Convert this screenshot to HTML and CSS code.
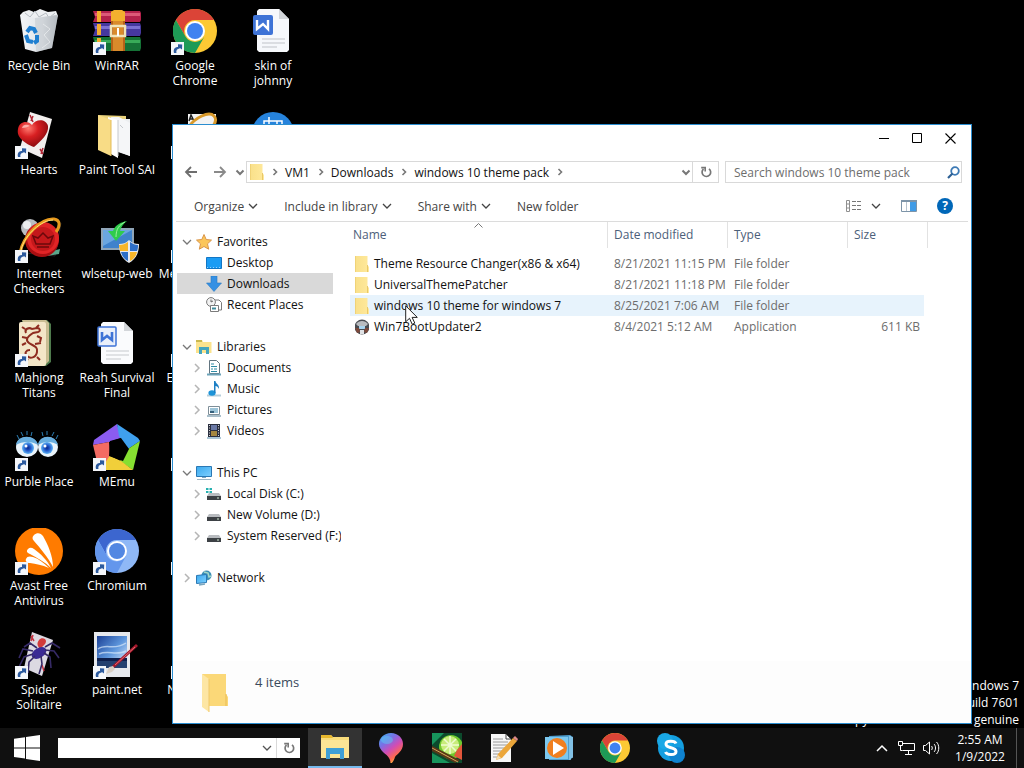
FILE: index.html
```html
<!DOCTYPE html>
<html lang="en">

<head>
    <meta charset="UTF-8">
    <meta name="viewport" content="width=device-width, initial-scale=1.0">
    <title>Desktop</title>
    <link rel="stylesheet" href="styles.css">
</head>

<body>
    <!-- Shared icons -->
    <svg class="sprite" aria-hidden="true">
        <defs>
            <linearGradient id="gFolder" x1="0" x2="1"><stop offset="0" stop-color="#f9e08a"/><stop offset="1" stop-color="#ffe99c"/></linearGradient>
            <radialGradient id="gRed" cx=".35" cy=".3" r=".8"><stop offset="0" stop-color="#ff7a70"/><stop offset=".4" stop-color="#d81f22"/><stop offset="1" stop-color="#7c060b"/></radialGradient>
            <linearGradient id="gBin" x1="0" x2="1"><stop offset="0" stop-color="#f4f6f8"/><stop offset=".6" stop-color="#dfe3e7"/><stop offset="1" stop-color="#a3a9af"/></linearGradient>
            <linearGradient id="gSky" x1="0" y1="0" x2="1" y2="1"><stop offset="0" stop-color="#1b3f94"/><stop offset=".5" stop-color="#5d96dc"/><stop offset="1" stop-color="#e8f3ff"/></linearGradient>
            <linearGradient id="gScreen" x1="0" y1="0" x2="1" y2="1"><stop offset="0" stop-color="#3aa9ee"/><stop offset="1" stop-color="#7fd0ff"/></linearGradient>
            <linearGradient id="gPin" x1="0" y1="0" x2=".6" y2="1"><stop offset="0" stop-color="#35b8f1"/><stop offset=".35" stop-color="#7a6fe6"/><stop offset=".6" stop-color="#d14cb4"/><stop offset=".85" stop-color="#ff6a4d"/><stop offset="1" stop-color="#ffc83d"/></linearGradient>
            <radialGradient id="gEye" cx=".5" cy=".5" r=".5"><stop offset="0" stop-color="#0b2a86"/><stop offset=".4" stop-color="#1c4fc4"/><stop offset="1" stop-color="#5fb4f5"/></radialGradient>
        </defs>
        <symbol id="shortcut" viewBox="0 0 13 13">
            <path d="M0 0h13v13H0z" fill="#f4f6fa"/>
            <path d="M3 11c-1-4 1-6 4-6V2.200l4.200 .2-.2 5.100-1.700-1.300C6 7 5 8 5.500 11z" fill="#2c5a9e"/>
        </symbol>
        <symbol id="chrome" viewBox="0 0 44 44">
            <circle cx="22" cy="22" r="22" fill="#fcc934"/>
            <path d="M2.900 11A22 22 0 0 1 41 11H22A11 11 0 0 0 12.500 27.500z" fill="#db4437"/>
            <path d="M2.900 11A22 22 0 0 0 22 44L31.500 27.500A11 11 0 0 1 12.500 27.500z" fill="#1e9a56"/>
            <circle cx="22" cy="22" r="10" fill="#fff"/>
            <circle cx="22" cy="22" r="8" fill="#3f82f0"/>
        </symbol>
        <symbol id="folder" viewBox="0 0 14 16">
            <path d="M0 0h12.500v9l1.500 2v5H0z" fill="url(#gFolder)"/>
            <path d="M12.500 9v7M0 0v16" stroke="#e3bf5c" stroke-width=".8"/>
        </symbol>
        <symbol id="down" viewBox="0 0 10 10">
            <path d="M1 3l4 4 4-4" fill="none" stroke="currentColor" stroke-width="1.300"/>
        </symbol>
        <symbol id="down-bold" viewBox="0 0 10 10">
            <path d="M1.500 3.500l3.500 3.500 3.500-3.500" fill="none" stroke="currentColor" stroke-width="2"/>
        </symbol>
        <symbol id="right" viewBox="0 0 10 10">
            <path d="M3 1l4 4-4 4" fill="none" stroke="currentColor" stroke-width="1.500"/>
        </symbol>
        <symbol id="right-small" viewBox="0 0 10 10">
            <path d="M3.500 2l3 3-3 3" fill="none" stroke="currentColor" stroke-width="1.600"/>
        </symbol>
        <symbol id="refresh" viewBox="0 0 12 12">
            <path d="M9 2.800A4.300 4.300 0 1 1 3.500 3" fill="none" stroke="currentColor" stroke-width="1.700"/>
            <path d="M1.200 1.600h4v4" fill="none" stroke="currentColor" stroke-width="1.600"/>
        </symbol>
        <symbol id="disk" viewBox="0 0 16 16">
            <path d="M3 7h10l2 3H1z" fill="#b9bcc0"/>
            <path d="M1 10h14v4H1z" fill="#3d4145"/>
            <path d="M11 12h2" stroke="#cfe8cf"/>
        </symbol>
    </svg>

    <main class="desktop">
        <!-- Desktop icons, "first" starts a new row -->
        <div class="icons">
            <a class="icon first" href="#">
                <span class="pic"><svg viewBox="0 0 48 48">
                    <path d="M5 7l3-3 6-2 5 2 6-3 8 3 8-1 2 5-4 5H9z" fill="#eef0f2"/>
                    <path d="M10 5l5 4 5-6 4 6 7-4 3 5 6-5" fill="none" stroke="#b6bcc2"/>
                    <path d="M5 7l15 3 23-3-6 33-16 4-11-3z" fill="url(#gBin)"/>
                    <path d="M20 10l23-3-6 33-16 4z" fill="#c3c8cd" opacity=".55"/>
                    <path d="M28 16l7 5-6 6 6 7-8 6" fill="none" stroke="#f4f5f6" opacity=".6"/>
                    <g fill="none" stroke="#1f7fd0" stroke-width="4">
                        <path d="M12 24l3-4 4 1 2 4"/>
                        <path d="M11 27l2 6 5 1"/>
                        <path d="M22 27v6l-3 2"/>
                    </g>
                </svg></span>
                <span class="name">Recycle Bin</span>
            </a>
            <a class="icon" href="#">
                <span class="pic"><svg viewBox="0 0 48 48">
                    <path d="M0 3h47l1 2v7l-1 2H0l2-5z" fill="#b4224c"/>
                    <path d="M2 5h45v3H2z" fill="#dc5a78"/>
                    <path d="M0 15h47l1 3v7l-1 3H0l2-6z" fill="#46389f"/>
                    <path d="M2 18h45v3H2z" fill="#7b70d2"/>
                    <path d="M0 29h47l1 3v8l-1 3H0l2-6z" fill="#157236"/>
                    <path d="M2 32h45v3H2z" fill="#38ab58"/>
                    <path d="M4 3h4v11H4zM4 16h4v11H4zM4 30h4v12H4z" fill="#f4ae2e"/>
                    <path d="M18 3h14v40H18z" fill="#b66219"/>
                    <path d="M20 3h10v40H20z" fill="#d98a2b"/>
                    <path d="M18 4l3-2h8l3 2v9H18z" fill="#f3b02e"/>
                    <path d="M18 18h14v10H18z" fill="none" stroke="#efe3b8" stroke-width="2.500"/>
                    <path d="M25 20v8" stroke="#fff" stroke-width="2"/>
                </svg><svg class="arrow"><use href="#shortcut"/></svg></span>
                <span class="name">WinRAR</span>
            </a>
            <a class="icon" href="#">
                <span class="pic"><svg viewBox="0 0 48 48"><use href="#chrome" x="2" y="1" width="44" height="44"/></svg><svg class="arrow"><use href="#shortcut"/></svg></span>
                <span class="name">Google Chrome</span>
            </a>
            <a class="icon" href="#">
                <span class="pic"><svg viewBox="0 0 48 48">
                    <path d="M10 1h20l10 10v31l-2 2H10l-2-2V3z" fill="#f6f8fb"/>
                    <path d="M30 1v10h10z" fill="#d3d6da"/>
                    <path d="M13 31h23M13 35h23M13 39h15" stroke="#c0c3c8"/>
                    <rect x="4" y="7" width="20" height="20" rx="2" fill="#3e73d6"/>
                    <path d="M8 12v9l6-5 5 5v-9" fill="none" stroke="#fff" stroke-width="2.400"/>
                </svg></span>
                <span class="name">skin of johnny</span>
            </a>
            <a class="icon first" href="#">
                <span class="pic"><svg viewBox="0 0 48 48">
                    <path d="M15 0l22 7-10 39-22-10z" fill="#f2efee"/>
                    <path d="M15 3l3 7M16 9l2-5M25 37l3 5M28 36l-2 6" stroke="#b02634" stroke-width="1.500"/>
                    <path d="M19 35C11 32 1 26 3 17c1-8 10-9 14-4 3-6 14-7 16 1 1 8-7 15-14 21z" fill="url(#gRed)"/>
                    <path d="M7 16c1-4 5-4 8-2-3 1-5 2-8 2z" fill="#ffc5bf" opacity=".8"/>
                </svg><svg class="arrow"><use href="#shortcut"/></svg></span>
                <span class="name">Hearts</span>
            </a>
            <a class="icon" href="#">
                <span class="pic"><svg viewBox="0 0 48 48">
                    <path d="M5 3l28 1v32l-20 3z" fill="#e9d27c"/>
                    <path d="M26 7h11v37l-12-4z" fill="#eceef0"/>
                    <path d="M18 5h8l11 6v33l-13-5z" fill="#f5f6f8"/>
                    <path d="M15 5l10 3v38l-9-5z" fill="#fff"/>
                    <path d="M5 3l13 5v36L5 38z" fill="#f8dc86"/>
                    <path d="M18 8v36" stroke="#e5bd59"/>
                    <path d="M27 13l3 3M25 8v36" stroke="#c5c8cc"/>
                </svg></span>
                <span class="name">Paint Tool SAI</span>
            </a>
            <a class="icon" href="#">
                <span class="pic"><svg viewBox="0 0 48 48">
                    <path d="M17 2h28v40H17z" fill="#f3f3f3"/>
                    <path d="M18 9l2-6 3 6M19 7h3" fill="none" stroke="#222" stroke-width="1.500"/>
                    <path d="M17 16C24 5 38-1 43 4s-3 14-10 20" fill="none" stroke="#d99a2b" stroke-width="3"/>
                </svg><svg class="arrow"><use href="#shortcut"/></svg></span>
                <span class="name">Solitaire</span>
            </a>
            <a class="icon" href="#" aria-label="App">
                <span class="pic"><svg viewBox="0 0 48 48">
                    <circle cx="24" cy="21" r="21" fill="#2683dc"/>
                    <path d="M15 9h18v14H15zM20 5v8M28 9v4" fill="none" stroke="#fff" stroke-width="1.500"/>
                </svg></span>
            </a>
            <a class="icon first" href="#">
                <span class="pic"><svg viewBox="0 0 48 48">
                    <path d="M37 4l9 3-6 33-30-3" fill="none" stroke="#222"/>
                    <circle cx="15" cy="12" r="9" fill="#b9bdc1"/>
                    <circle cx="12" cy="9" r="4" fill="#eceeef"/>
                    <path d="M30 37l15-4-1 5-12 2z" fill="#5aa58a"/>
                    <circle cx="27" cy="24" r="17" fill="#a90f12"/>
                    <circle cx="28" cy="22" r="16" fill="#e02426"/>
                    <circle cx="28" cy="23" r="12" fill="#c4181b"/>
                    <path d="M21 28l-3-8 5 2 5-5 5 5 5-2-3 8zM22 31h12" fill="none" stroke="#6b080b" stroke-width="1.500"/>
                    <path d="M5 37C8 20 26 2 39 3c7 1 6 8 2 13" fill="none" stroke="#e79a1e" stroke-width="3"/>
                    <path d="M6 34C10 18 27 4 38 4" fill="none" stroke="#ffdf79"/>
                </svg><svg class="arrow"><use href="#shortcut"/></svg></span>
                <span class="name">Internet Checkers</span>
            </a>
            <a class="icon" href="#">
                <span class="pic"><svg viewBox="0 0 48 48">
                    <path d="M8 12h33v22H8z" fill="#8fa5b8"/>
                    <path d="M10 14h29v18H10z" fill="#3f82cc"/>
                    <path d="M10 14h29L10 30z" fill="#6aa6e0"/>
                    <path d="M34 5c-6 1-12 4-14 10h-5l8 10 9-10h-5c1-4 3-7 7-10z" fill="#2fcc4c"/>
                    <path d="M32 6c-6 3-9 7-9 15" fill="none" stroke="#9bf29b"/>
                    <path d="M36 24c3 3 6 4 10 4 0 9-3 15-10 19-7-4-10-10-10-19 4 0 7-1 10-4z" fill="#e8eaee"/>
                    <path d="M35 26v9h-8c0-2-1-4-1-6 4 0 6-1 9-3zM37 36h7c-1 4-3 7-7 9z" fill="#f7b62a"/>
                    <path d="M37 26c3 2 5 3 8 3 0 2 0 4-1 6h-7zM28 36h7v9c-4-2-6-5-7-9z" fill="#2d6fc8"/>
                </svg></span>
                <span class="name">wlsetup-web</span>
            </a>
            <a class="icon" href="#">
                <span class="pic"><svg class="arrow"><use href="#shortcut"/></svg></span>
                <span class="name">Media Player</span>
            </a>
            <a class="icon first" href="#">
                <span class="pic"><svg viewBox="0 0 48 48">
                    <path d="M7 0h25l4 4v38l-5 4H10z" fill="#4e7a4c"/>
                    <path d="M7 0h24l3 3v38l-4 4z" fill="#c9bd93"/>
                    <rect x="4" y="2" width="27" height="44" rx="2" fill="#f3e6c8"/>
                    <path d="M11 13c-2-4 3-6 6-4l5-1c3 0 4 3 1 4l-5 1c-6 4-8 7-4 10s9 3 8 9-7 7-10 4-1-6 3-6M10 9l-3-2M21 8l3-3M12 18l-5-1M11 23l-4 2M22 16l4 2-1 4M20 24l6-1M13 39l-3 3M22 37l3 3" fill="none" stroke="#8f2c20" stroke-width="2"/>
                </svg><svg class="arrow"><use href="#shortcut"/></svg></span>
                <span class="name">Mahjong Titans</span>
            </a>
            <a class="icon" href="#">
                <span class="pic"><svg viewBox="0 0 48 48">
                    <path d="M10 2h21l9 9v31l-2 2H10l-2-2V4z" fill="#fafbfd"/>
                    <path d="M31 2v9h9z" fill="#d3d6da"/>
                    <path d="M13 31h23M13 35h23M13 39h15" stroke="#c6c9cd"/>
                    <rect x="5" y="7" width="18" height="19" rx="1" fill="#e9effa" stroke="#3e73d6" stroke-width="1.500"/>
                    <path d="M9 12v8l5-4 5 4v-8" fill="none" stroke="#3e73d6" stroke-width="2.600"/>
                </svg></span>
                <span class="name">Reah Survival Final</span>
            </a>
            <a class="icon" href="#">
                <span class="pic"><svg class="arrow"><use href="#shortcut"/></svg></span>
                <span class="name">Emulators</span>
            </a>
            <a class="icon first" href="#">
                <span class="pic"><svg viewBox="0 0 48 48">
                    <path d="M4 15L2 11M8 12L6 8M12 11V7M16 12l1-4M28 12l-1-4M32 11V7M37 12l2-4M41 15l2-4" stroke="#2d7fb4"/>
                    <ellipse cx="12" cy="23" rx="11" ry="10" fill="#eaf4fb"/>
                    <ellipse cx="33" cy="23" rx="10" ry="10" fill="#eaf4fb"/>
                    <path d="M1 21c1-11 20-11 22 0-6-4-16-4-22 0zM23 21c1-11 18-11 20 0-6-4-14-4-20 0z" fill="#69aede"/>
                    <circle cx="13" cy="24" r="6" fill="url(#gEye)"/>
                    <circle cx="32" cy="24" r="6" fill="url(#gEye)"/>
                    <circle cx="11" cy="22" r="1.500" fill="#fff"/>
                    <circle cx="30" cy="22" r="1.500" fill="#fff"/>
                </svg><svg class="arrow"><use href="#shortcut"/></svg></span>
                <span class="name">Purble Place</span>
            </a>
            <a class="icon" href="#">
                <span class="pic"><svg viewBox="0 0 48 48">
                    <path d="M24 0L1 16l-1 5 16-3 12-4z" fill="#8b5cf0"/>
                    <path d="M24 0l21 14 2 3-12 8-9-13z" fill="#3fa0ee"/>
                    <path d="M47 17l-7 29-13-9 8-12z" fill="#86df31"/>
                    <path d="M40 46H6l9-15 13 6z" fill="#f1cf3a"/>
                    <path d="M0 21l16-3 1 13-9 15H6z" fill="#f36b63"/>
                    <path d="M17 17l11-3 8 11-6 12-14-5z" fill="#000"/>
                </svg><svg class="arrow"><use href="#shortcut"/></svg></span>
                <span class="name">MEmu</span>
            </a>
            <a class="icon" href="#">
                <span class="pic"><svg class="arrow"><use href="#shortcut"/></svg></span>
                <span class="name">Tools</span>
            </a>
            <a class="icon first" href="#">
                <span class="pic"><svg viewBox="0 0 48 48">
                    <circle cx="24" cy="23" r="24" fill="#ff7b00"/>
                    <path d="M19 7c3-3 7-2 9 1 5 9 10 20 10 31C33 29 25 20 19 13c-2-2-2-4 0-6z" fill="#fff"/>
                    <path d="M13 21c2-2 4-1 6 0 7 5 13 11 17 19-6-6-14-10-21-14-3-1-4-3-2-5z" fill="#fff"/>
                    <path d="M11 31c1-3 4-3 7-2 6 2 11 6 16 11-7-3-13-4-19-5-3 0-5-2-4-4z" fill="#fff"/>
                </svg><svg class="arrow"><use href="#shortcut"/></svg></span>
                <span class="name">Avast Free Antivirus</span>
            </a>
            <a class="icon" href="#">
                <span class="pic"><svg viewBox="0 0 48 48">
                    <circle cx="24" cy="23" r="22" fill="#8fb8f6"/>
                    <path d="M5 12A22 22 0 0 1 43 12H24A11 11 0 0 0 14 28z" fill="#3c66cf"/>
                    <path d="M5 12A22 22 0 0 0 24 45L33 28A11 11 0 0 1 14 28z" fill="#6396ec"/>
                    <circle cx="24" cy="23" r="10" fill="#fff"/>
                    <circle cx="24" cy="23" r="8" fill="#5287e2"/>
                </svg><svg class="arrow"><use href="#shortcut"/></svg></span>
                <span class="name">Chromium</span>
            </a>
            <a class="icon" href="#">
                <span class="pic"><svg class="arrow"><use href="#shortcut"/></svg></span>
                <span class="name">Music</span>
            </a>
            <a class="icon first" href="#">
                <span class="pic"><svg viewBox="0 0 48 48">
                    <path d="M17 0l21 8-11 36-18-8z" fill="#dcd9e2"/>
                    <path d="M16 4l3 5M18 3l-2 6M27 33l2 6" stroke="#c23240" stroke-width="1.500"/>
                    <path d="M24 8c2-3 7-2 7 1 0 4-5 6-6 8-2-3-4-5-1-9z" fill="#d23b3b"/>
                    <ellipse cx="24" cy="21" rx="8" ry="5" transform="rotate(-30 24 21)" fill="#3b2a94"/>
                    <path d="M18 19L8 17 4 26M18 22l-9 3-5 10M20 24l-6 6-1 11M26 24l1 8-3 10M29 21l6 4 1 11M30 18l9 1 5 7M30 15l7-4 8 5M22 16l-7-5-6 4" fill="none" stroke="#362a66" stroke-width="1.600"/>
                </svg><svg class="arrow"><use href="#shortcut"/></svg></span>
                <span class="name">Spider Solitaire</span>
            </a>
            <a class="icon" href="#">
                <span class="pic"><svg viewBox="0 0 48 48">
                    <path d="M1 0h36v45H1z" fill="#e6e8ec"/>
                    <path d="M4 4h30v32H4z" fill="url(#gSky)"/>
                    <path d="M5 17c8-6 16 2 28-6M6 22c9-4 18 2 27-3" fill="none" stroke="#d5e7fa" stroke-width="1.500" opacity=".7"/>
                    <path d="M4 26h30v3H4z" fill="#0e1f4c"/>
                    <path d="M4 29h30v7H4z" fill="#24406f"/>
                    <path d="M20 35L44 13" stroke="#a3182b" stroke-width="3"/>
                    <path d="M22 33l20-18" stroke="#e06a72"/>
                    <path d="M13 42l3-7 4-1 2 3-3 3z" fill="#d9cfc4"/>
                </svg><svg class="arrow"><use href="#shortcut"/></svg></span>
                <span class="name">paint.net</span>
            </a>
            <a class="icon" href="#">
                <span class="pic"><svg class="arrow"><use href="#shortcut"/></svg></span>
                <span class="name">Notepad+</span>
            </a>
        </div>

        <div class="watermark">
            Windows 7<br>
            Build 7601<br>
            This copy of Windows is not genuine
        </div>

        <!-- Explorer window -->
        <section class="window">
            <div class="titlebar">
                <button aria-label="Minimize"><svg width="11" height="11"><path d="M0 5.500h10" stroke="#000"/></svg></button>
                <button aria-label="Maximize"><svg width="11" height="11"><path d="M.5 .5h9v9h-9z" fill="none" stroke="#000"/></svg></button>
                <button aria-label="Close"><svg width="11" height="11"><path d="M.5 .5l10 10M10.500 .5l-10 10" stroke="#000" stroke-width="1.100"/></svg></button>
            </div>

            <div class="nav">
                <button class="go" aria-label="Back"><svg width="14" height="12"><path d="M13 6H2M7 1L2 6l5 5" fill="none" stroke="#6e6e6e" stroke-width="1.800"/></svg></button>
                <button class="go" aria-label="Forward"><svg width="14" height="12"><path d="M1 6h11M7 1l5 5-5 5" fill="none" stroke="#8a8a8a" stroke-width="1.800"/></svg></button>
                <button class="recent" aria-label="Recent locations"><svg class="chev"><use href="#down-bold"/></svg></button>
                <div class="address">
                    <svg class="folder"><use href="#folder"/></svg>
                    <svg class="chev"><use href="#right-small"/></svg>
                    <a href="#">VM1</a>
                    <svg class="chev"><use href="#right-small"/></svg>
                    <a href="#">Downloads</a>
                    <svg class="chev"><use href="#right-small"/></svg>
                    <a href="#">windows 10 theme pack</a>
                    <svg class="chev"><use href="#right-small"/></svg>
                    <button class="history" aria-label="Previous locations"><svg class="chev"><use href="#down-bold"/></svg></button>
                    <button class="reload" aria-label="Refresh"><svg width="12" height="12"><use href="#refresh"/></svg></button>
                </div>
                <div class="search">
                    <input type="text" placeholder="Search windows 10 theme pack" aria-label="Search windows 10 theme pack">
                    <button aria-label="Search"><svg width="13" height="13"><circle cx="8" cy="5" r="3.800" fill="none" stroke="#3d7ab5" stroke-width="1.800"/><path d="M5.500 7.500L1 12" stroke="#2c5f93" stroke-width="2.200"/></svg></button>
                </div>
            </div>

            <div class="toolbar">
                <button>Organize <svg class="chev"><use href="#down"/></svg></button>
                <button>Include in library <svg class="chev"><use href="#down"/></svg></button>
                <button>Share with <svg class="chev"><use href="#down"/></svg></button>
                <button>New folder</button>
                <span class="tools">
                    <button class="view" aria-label="Change your view"><svg width="18" height="14">
                        <path d="M1.500 1.500h3v11h-3zM1.500 5h3M1.500 9h3" fill="none" stroke="#8f8f8f"/>
                        <path d="M7 2.500h4M7 6.500h4M7 10.500h4M12 2.500h4M12 6.500h4M12 10.500h4" stroke="#777"/>
                    </svg><svg class="chev"><use href="#down"/></svg></button>
                    <button aria-label="Preview pane"><svg width="16" height="12">
                        <path d="M.5 .5h15v11H.5z" fill="#fff" stroke="#7d94a8"/>
                        <path d="M0 0h16v2H0z" fill="#7d94a8"/>
                        <path d="M9 2h6v9H9z" fill="#3f9be6"/>
                        <path d="M5.500 2v9" stroke="#b8c4cf"/>
                    </svg></button>
                    <button aria-label="Help"><span class="help">?</span></button>
                </span>
            </div>

            <div class="body">
                <nav class="tree">
                    <ul>
                        <li class="row"><button aria-label="Collapse"><svg class="chev"><use href="#down"/></svg></button>
                            <svg class="ico" viewBox="0 0 16 16"><path d="M8 .5l2.200 5 5.300 .6-4 3.700 1.200 5.400L8 12.500l-4.700 2.700 1.200-5.400-4-3.700 5.300-.6z" fill="#fbc65a" stroke="#d9954a"/></svg>
                            <a href="#">Favorites</a></li>
                        <li class="row child">
                            <svg class="ico" viewBox="0 0 16 16"><path d="M.5 2.500h15v11H.5z" fill="#1b9cf4" stroke="#1276c4"/><path d="M1 12.500h14" stroke="#8fd0ff" stroke-dasharray="1 2"/></svg>
                            <a href="#">Desktop</a></li>
                        <li class="row child selected">
                            <svg class="ico" viewBox="0 0 16 16"><path d="M5 0h6v7h4.500L8 15.500 .5 7H5z" fill="#3590e3" stroke="#2a7ac4" stroke-width=".6"/></svg>
                            <a href="#">Downloads</a></li>
                        <li class="row child">
                            <svg class="ico" viewBox="0 0 16 16"><path d="M7 3h6l2.500 2.500V13H7z" fill="#fff" stroke="#7b7b7b"/><circle cx="5" cy="5" r="4.400" fill="#f2f2f2" stroke="#7b7b7b"/><path d="M5 2.500V5l2-1" fill="none" stroke="#666"/><path d="M4.500 8.500h8v6h-8z" fill="#fff" stroke="#7b7b7b"/><path d="M6 11.500h4" stroke="#3e8a9b" stroke-width="2"/></svg>
                            <a href="#">Recent Places</a></li>
                    </ul>
                    <ul>
                        <li class="row"><button aria-label="Collapse"><svg class="chev"><use href="#down"/></svg></button>
                            <svg class="ico" viewBox="0 0 16 16"><path d="M0 1h6l1 2h8.500v11H0z" fill="#fbe38d"/><path d="M0 1h6v2H0z" fill="#c9b84f"/><path d="M3 15V8h10v7h-3v-4H6v4z" fill="#44a5bd"/></svg>
                            <a href="#">Libraries</a></li>
                        <li class="row child"><button aria-label="Expand"><svg class="chev"><use href="#right"/></svg></button>
                            <svg class="ico" viewBox="0 0 16 16"><path d="M3.500 .5h7l3 3v10h-10z" fill="#fff" stroke="#627580"/><path d="M5 4h3M5 6.500h6M5 9h2M8 9h3M5 11.500h6" stroke="#2e8ba5"/><path d="M1 14.500h14" stroke="#6da3b8" stroke-width="2"/></svg>
                            <a href="#">Documents</a></li>
                        <li class="row child"><button aria-label="Expand"><svg class="chev"><use href="#right"/></svg></button>
                            <svg class="ico" viewBox="0 0 16 16"><path d="M1 14.500h14" stroke="#b6cedb" stroke-width="2"/><ellipse cx="6" cy="12" rx="3.600" ry="2.800" fill="#1d94d8"/><path d="M8 0h1.500c0 3 4 3 3.500 8-1-2-2-3-3.500-3v7H8z" fill="#1d7fc4"/></svg>
                            <a href="#">Music</a></li>
                        <li class="row child"><button aria-label="Expand"><svg class="chev"><use href="#right"/></svg></button>
                            <svg class="ico" viewBox="0 0 16 16"><path d="M2.500 4.500h11v8h-11z" fill="#fff" stroke="#7e8e98"/><path d="M4 6h8v5H4z" fill="#9cc4d8"/><path d="M4 9h4v2H4z" fill="#34607c"/><path d="M1 14h14" stroke="#a9bfcb" stroke-width="2"/></svg>
                            <a href="#">Pictures</a></li>
                        <li class="row child"><button aria-label="Expand"><svg class="chev"><use href="#right"/></svg></button>
                            <svg class="ico" viewBox="0 0 16 16"><path d="M2 1h12v13H2z" fill="#2b3040"/><path d="M5 2h6v5H5z" fill="#6a79a6"/><path d="M5 8h6v5H5z" fill="#a5873f"/><path d="M3.500 2v12M12.500 2v12" stroke="#d8d8d8" stroke-dasharray="1 1.500"/><path d="M1 15h14" stroke="#8fb3c8" stroke-width="1.500"/></svg>
                            <a href="#">Videos</a></li>
                    </ul>
                    <ul>
                        <li class="row"><button aria-label="Collapse"><svg class="chev"><use href="#down"/></svg></button>
                            <svg class="ico" viewBox="0 0 16 16"><path d="M.5 1.500h15v10H.5z" fill="url(#gScreen)" stroke="#2a78b4"/><path d="M6 12h4v1H6z" fill="#7fa6bf"/><path d="M1 14.500h14" stroke="#9fb6c4"/></svg>
                            <a href="#">This PC</a></li>
                        <li class="row child"><button aria-label="Expand"><svg class="chev"><use href="#right"/></svg></button>
                            <svg class="ico" viewBox="0 0 16 16"><use href="#disk" width="16" height="16"/><path d="M0 2h2.500v2H0zM3.500 2H6v2H3.500zM0 5h2.500v2H0zM3.500 5H6v2H3.500z" fill="#27b0b0"/></svg>
                            <a href="#">Local Disk (C:)</a></li>
                        <li class="row child"><button aria-label="Expand"><svg class="chev"><use href="#right"/></svg></button>
                            <svg class="ico"><use href="#disk"/></svg>
                            <a href="#">New Volume (D:)</a></li>
                        <li class="row child"><button aria-label="Expand"><svg class="chev"><use href="#right"/></svg></button>
                            <svg class="ico"><use href="#disk"/></svg>
                            <a href="#">System Reserved (F:)</a></li>
                    </ul>
                    <ul>
                        <li class="row closed"><button aria-label="Expand"><svg class="chev"><use href="#right"/></svg></button>
                            <svg class="ico" viewBox="0 0 16 16"><circle cx="10.500" cy="5.500" r="5" fill="#3c8fb5"/><path d="M8 2l4 1 1 4 2-1" fill="none" stroke="#a5d7c8" stroke-width="1.500"/><path d="M.5 5.500l10-1v8l-10 1z" fill="url(#gScreen)" stroke="#2a78b4"/><path d="M3 15l6-1" stroke="#7aa6be" stroke-width="1.500"/></svg>
                            <a href="#">Network</a></li>
                    </ul>
                </nav>

                <div class="files">
                    <table>
                        <thead>
                            <tr>
                                <th class="c-name">Name <svg class="sort" width="9" height="5"><path d="M.5 4.500l4-4 4 4" fill="none" stroke="#777"/></svg></th>
                                <th class="c-date">Date modified</th>
                                <th class="c-type">Type</th>
                                <th class="c-size">Size</th>
                            </tr>
                        </thead>
                        <tbody>
                            <tr>
                                <td><svg class="folder"><use href="#folder"/></svg>Theme Resource Changer(x86 &amp; x64)</td>
                                <td>8/21/2021 11:15 PM</td>
                                <td>File folder</td>
                                <td></td>
                            </tr>
                            <tr>
                                <td><svg class="folder"><use href="#folder"/></svg>UniversalThemePatcher</td>
                                <td>8/21/2021 11:18 PM</td>
                                <td>File folder</td>
                                <td></td>
                            </tr>
                            <tr class="hover">
                                <td><svg class="folder"><use href="#folder"/></svg>windows 10 theme for windows 7</td>
                                <td>8/25/2021 7:06 AM</td>
                                <td>File folder</td>
                                <td></td>
                            </tr>
                            <tr>
                                <td><svg class="folder" viewBox="1 0 14 16"><circle cx="8" cy="8" r="7.500" fill="#4a4d52"/><path d="M2 5c3-4 9-4 12 0l-2 2H4z" fill="#b9bcc0"/><path d="M5 7h6v3H5z" fill="#a8d4ef"/><path d="M1 9h4l1 4-3 1zM15 9h-4l-1 4 3 1z" fill="#7d4a3c"/><path d="M6 11h4v4H6z" fill="#dfe2e5"/></svg>Win7BootUpdater2</td>
                                <td>8/4/2021 5:12 AM</td>
                                <td>Application</td>
                                <td>611 KB</td>
                            </tr>
                        </tbody>
                    </table>
                </div>
            </div>

            <div class="details">
                <svg width="28" height="40" viewBox="0 0 28 40"><path d="M1 1h24v20l2 3v9H8z" fill="#fbd878"/><path d="M25 21v12" stroke="#e8bb55"/><path d="M1 1l7 5v33l-7-5z" fill="#fde6a4"/><path d="M8 6v33" stroke="#f0c96a"/></svg>
                <span>4 items</span>
            </div>
        </section>

        <svg class="cursor" width="13" height="20"><path d="M.7 .8v16l3.800-3.500 2.700 6 2.600-1.200-2.700-5.700h5.200z" fill="#fff" stroke="#222"/></svg>
    </main>

    <footer class="taskbar">
        <button class="start" aria-label="Start"><svg width="26" height="26"><path d="M0 3.800l11-1.600v10.200H0zM12 2l14-2v12.400H12zM0 13.400h11v10.200L0 22zM12 13.400h14V26l-14-2z" fill="#fff"/></svg></button>
        <div class="task-address">
            <input type="text" aria-label="Address">
            <button aria-label="Previous addresses"><svg class="chev"><use href="#down"/></svg></button>
            <button class="reload" aria-label="Go"><svg width="12" height="12"><use href="#refresh"/></svg></button>
        </div>
        <div class="apps">
            <button class="open" aria-label="File Explorer"><svg viewBox="0 0 30 30">
                <path d="M1 3h10l2 2h16v21H1z" fill="#f9dc7b"/>
                <path d="M1 3h10l2 3H1z" fill="#e8b82d"/>
                <path d="M1 8h28v18H1z" fill="#fce596"/>
                <path d="M6 27V16h18v11h-4v-5H10v5z" fill="#3f9fd6"/>
            </svg></button>
            <button aria-label="Paint 3D"><svg viewBox="0 0 30 30">
                <path d="M15 0c7 0 12 5 12 11 0 7-6 10-8 13-1 3-2 6-5 7 1-2 0-4-1-6C11 21 3 18 3 11 3 5 8 0 15 0z" fill="url(#gPin)"/>
                <ellipse cx="11" cy="7" rx="6" ry="4" fill="#5fd0f5" opacity=".45"/>
            </svg></button>
            <button aria-label="Paint Tool"><svg viewBox="0 0 30 30">
                <path d="M0 0h30v30H0z" fill="#0c4a2c"/>
                <path d="M0 0h12L0 12zM0 20l18 10H0z" fill="#17945c"/>
                <circle cx="19" cy="14" r="12" fill="#6fc82e"/>
                <circle cx="18" cy="12" r="9" fill="#c8ec7b"/>
                <path d="M18 3v18M9 12h18M12 6l12 12M24 6L12 18" stroke="#eefbd0" stroke-width="1.500"/>
                <path d="M25 17l5-6v16l-8-4z" fill="#e2563b"/>
                <path d="M0 14l27 14M0 17l24 12" stroke="#5a3617" stroke-width="2"/>
                <path d="M0 15l26 14" stroke="#d7a55c"/>
            </svg></button>
            <button aria-label="Notepad"><svg viewBox="0 0 30 30">
                <path d="M3 1h15l5 5v23H3z" fill="#f7f7f7"/>
                <path d="M18 1v5h5z" fill="#fff" stroke="#444"/>
                <path d="M5 6h10M5 9h15M5 12h15M5 15h13M5 18h11M5 21h8M5 24h6" stroke="#9a9a9a"/>
                <path d="M8 27l2-6L25 5l4 3-15 17z" fill="#eba63a"/>
                <path d="M25 5l4 3 1-2-3-3z" fill="#e08b8b"/>
                <path d="M8 27l2-5 3 3z" fill="#f5dcae"/>
            </svg></button>
            <button aria-label="Media Player"><svg viewBox="0 0 30 30">
                <path d="M5 3l21-1 3 2v20l-3 3H5z" fill="#4f9fd0"/>
                <path d="M26 3v24M28 4v21" stroke="#b5e2fa"/>
                <path d="M1 4h23v22H1z" fill="#7cc8ef"/>
                <circle cx="13" cy="15" r="10" fill="#f07f1f"/>
                <path d="M9 8l11 7-11 7z" fill="#fff"/>
            </svg></button>
            <button aria-label="Google Chrome"><svg viewBox="0 0 30 30"><use href="#chrome" width="30" height="30"/></svg></button>
            <button aria-label="Skype"><svg viewBox="0 0 30 30">
                <circle cx="15" cy="15" r="13" fill="#149fe0"/>
                <circle cx="9" cy="8" r="8" fill="#19a8e6"/>
                <circle cx="21" cy="22" r="8" fill="#0f82cf"/>
                <path d="M20 10.500c-1-3-10-3.500-10 .5 0 5 10 2.500 10 7.500 0 4-9 4-10.500 .5" fill="none" stroke="#fff" stroke-width="3"/>
            </svg></button>
        </div>
        <div class="tray">
            <button aria-label="Show hidden icons"><svg width="12" height="8"><path d="M1 7l5-5 5 5" fill="none" stroke="#fff" stroke-width="1.500"/></svg></button>
            <button aria-label="Network"><svg width="17" height="14"><path d="M4.500 2.500h12v7H4.500M10.500 10v3M7 13.500h7" fill="none" stroke="#fff"/><path d="M.5 .5h4v4h-4zM2.500 4.500v5h2" fill="none" stroke="#fff"/></svg></button>
            <button aria-label="Volume"><svg width="17" height="14"><path d="M.5 4.500h2l4-3.500v12l-4-3.500h-2z" fill="none" stroke="#fff"/><path d="M8.500 5c1 1 1 3 0 4M11 3c2 2 2 6 0 8M13.500 1c3 3 3 9 0 12" fill="none" stroke="#fff"/></svg></button>
            <div class="clock">2:55 AM<br>1/9/2022</div>
            <button class="show" aria-label="Show desktop"></button>
        </div>
    </footer>
</body>

</html>
```
FILE: styles.css
```css
* {
    box-sizing: border-box;
}

body {
    margin: 0;
    height: 100vh;
    display: flex;
    flex-direction: column;
    overflow: hidden;
    background-color: #000;
    font-family: "Open Sans", "Noto Sans", sans-serif;
    font-size: 12px;
    line-height: 15px;
}

a {
    color: inherit;
    text-decoration: none;
}

button {
    display: flex;
    align-items: center;
    justify-content: center;
    margin: 0;
    padding: 0;
    border: 0;
    background: none;
    color: inherit;
    font: inherit;
}

input {
    border: 0;
    outline: 0;
    min-width: 0;
    background: none;
    font: inherit;
}

svg {
    display: block;
    flex: none;
}

.sprite {
    position: absolute;
    width: 0;
    height: 0;
}

.chev {
    width: 10px;
    height: 10px;
}

.folder {
    width: 14px;
    height: 16px;
}

/* Desktop */
.desktop {
    position: relative;
    flex: 1;
    min-height: 0;
}

.icons {
    display: grid;
    grid-template-columns: repeat(4, 78px);
    grid-auto-rows: 104px;
}

.icon {
    display: flex;
    flex-direction: column;
    align-items: center;
    padding-top: 8px;
    color: #fff;
    text-align: center;
}

.first {
    grid-column: 1;
}

.pic {
    position: relative;
    width: 48px;
    height: 48px;
    margin-bottom: 2px;
}

.arrow {
    position: absolute;
    left: 0;
    bottom: 1px;
    width: 13px;
    height: 13px;
}

.watermark {
    position: absolute;
    right: 5px;
    bottom: 0;
    color: #fff;
    line-height: 17px;
    text-align: right;
}

.cursor {
    position: absolute;
    left: 405px;
    top: 305px;
    z-index: 2;
}

/* Explorer window */
.window {
    position: absolute;
    top: 124px;
    right: 52px;
    bottom: 4px;
    left: 172px;
    z-index: 1;
    display: flex;
    flex-direction: column;
    border: 1px solid #2a8dd0;
    background-color: #fff;
    color: #111;
}

.titlebar {
    display: flex;
    justify-content: flex-end;
    padding-right: 4px;
}

.titlebar button {
    width: 33px;
    height: 26px;
}

.nav {
    display: flex;
    gap: 1px;
    padding: 10px 9px 8px 4px;
}

.go {
    width: 28px;
}

.recent {
    width: 10px;
    color: #777;
}

.address {
    display: flex;
    flex: 1;
    align-items: center;
    height: 22px;
    padding-left: 3px;
    border: 1px solid #d9d9d9;
    white-space: nowrap;
}

.address .chev {
    color: #777;
}

.address > .chev {
    margin: 0 5px 0 6px;
}

.history {
    width: 12px;
    margin-left: auto;
}

.reload {
    align-self: stretch;
    width: 26px;
    border-left: 1px solid #d9d9d9;
    color: #777;
}

.search {
    display: flex;
    width: 237px;
    margin-left: 5px;
    border: 1px solid #d9d9d9;
}

.search input {
    flex: 1;
    padding: 0 8px;
}

.search input::placeholder {
    color: #6d6d6d;
}

.search button {
    width: 15px;
}

.toolbar {
    display: flex;
    height: 31px;
    margin: 0 3px;
    padding-left: 5px;
    border-bottom: 1px solid #dcdcdc;
    color: #444;
}

.toolbar button {
    gap: 4px;
    padding: 0 13px;
}

.tools {
    display: flex;
    gap: 8px;
    margin-left: auto;
    padding-right: 9px;
}

.tools button {
    width: 28px;
    padding: 0;
}

.tools .view {
    gap: 8px;
    width: 48px;
}

.help {
    width: 16px;
    height: 16px;
    border-radius: 50%;
    background-color: #0067b8;
    color: #fff;
    font-weight: bold;
    line-height: 16px;
}

.body {
    display: flex;
    flex: 1;
    min-height: 0;
}

/* Folder tree */
.tree {
    width: 168px;
    padding: 9px 8px 0 4px;
    overflow: hidden;
}

.tree ul {
    margin: 0 0 21px;
    padding: 0;
    list-style: none;
}

.row {
    display: flex;
    align-items: center;
    height: 21px;
    padding-left: 5px;
    white-space: nowrap;
}

.row button {
    color: #777;
}

.row .ico {
    width: 16px;
    height: 16px;
    margin: 0 5px 0 4px;
}

.child {
    padding-left: 15px;
}

.child > .ico:first-child {
    margin-left: 14px;
}

.child button,
.closed button {
    color: #b5b5b5;
}

.selected {
    background-color: #d9d9d9;
}

/* File list */
.files {
    flex: 1;
    padding-left: 9px;
}

table {
    width: 578px;
    border-spacing: 0;
    table-layout: fixed;
}

th {
    position: relative;
    height: 26px;
    padding: 0 6px 2px;
    border-right: 1px solid #e2e2e2;
    color: #4c607a;
    font-weight: normal;
    text-align: left;
}

.c-name {
    width: 258px;
    padding-left: 3px;
}

.c-date,
.c-type {
    width: 120px;
}

.sort {
    position: absolute;
    top: 1px;
    left: 50%;
    margin-left: -5px;
}

tbody::before {
    content: "";
    display: block;
    height: 5px;
}

td {
    height: 21px;
    padding: 0 6px;
    color: #6d6d6d;
    white-space: nowrap;
}

td:first-child {
    display: flex;
    align-items: center;
    gap: 5px;
    padding-left: 5px;
    color: #111;
}

td:last-child {
    padding-right: 4px;
    border-right: 4px solid transparent;
    background-clip: padding-box;
    text-align: right;
}

.hover td {
    background-color: #e7f3fc;
}

.details {
    display: flex;
    gap: 26px;
    height: 62px;
    padding: 12px 28px 0;
    background-color: #fdfdfd;
    color: #3b4a5c;
    font-size: 13px;
    line-height: 18px;
}

/* Taskbar */
.taskbar {
    display: flex;
    align-items: center;
    height: 40px;
    background-color: #101010;
    color: #fff;
}

.start {
    width: 54px;
    height: 40px;
}

.task-address {
    display: flex;
    align-items: center;
    width: 242px;
    height: 20px;
    margin: 0 8px 0 4px;
    background-color: #fff;
    color: #555;
}

.task-address input {
    flex: 1;
}

.task-address .reload {
    width: 24px;
    margin-left: 4px;
}

.apps {
    display: flex;
    gap: 2px;
}

.apps button {
    width: 54px;
    height: 40px;
}

.apps svg {
    width: 30px;
    height: 30px;
}

.apps .open {
    border-bottom: 2px solid #76b9ed;
    background-color: #333;
}

.tray {
    display: flex;
    align-items: center;
    margin-left: auto;
}

.tray button {
    width: 25px;
    height: 40px;
}

.clock {
    width: 72px;
    line-height: 17px;
    text-align: center;
}

.tray .show {
    width: 8px;
    border-left: 1px solid #555;
}
```
